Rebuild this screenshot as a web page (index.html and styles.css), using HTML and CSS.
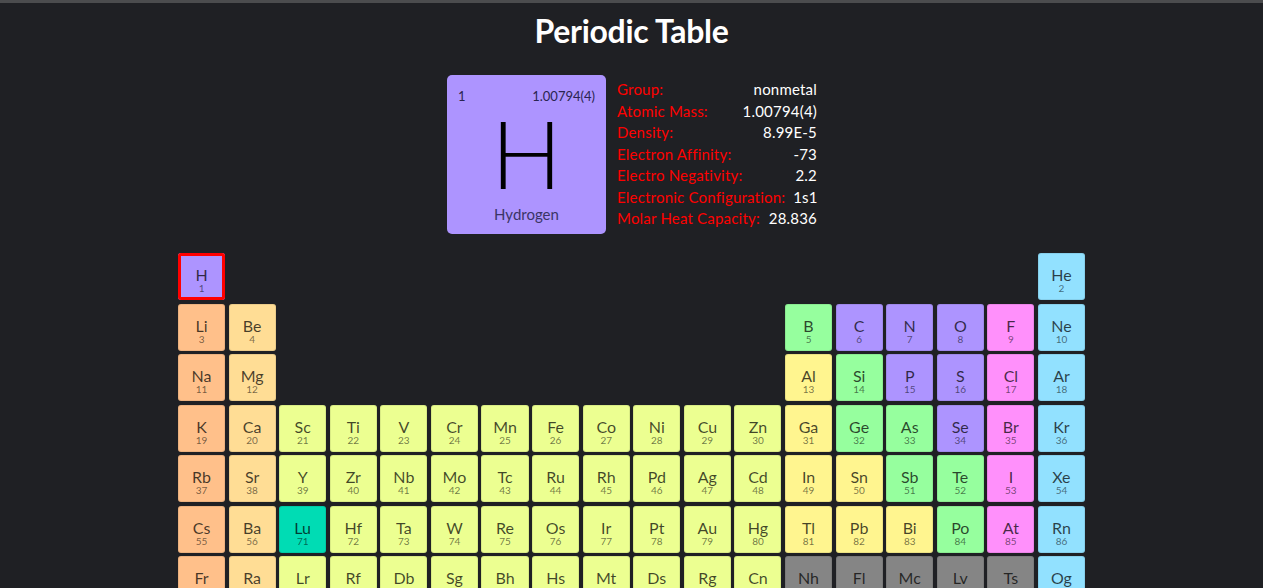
FILE: index.html
```html
<!DOCTYPE html>
<html lang="en">
<head>
<meta charset="utf-8">
<title>Periodic Table</title>
<link rel="stylesheet" href="styles.css">
</head>
<body>
<h1 class="title">Periodic Table</h1>
<section class="detail">
  <div class="card nonmetal">
    <div class="card-top"><span>1</span><span>1.00794(4)</span></div>
    <div class="card-symbol">H</div>
    <div class="card-name">Hydrogen</div>
  </div>
  <dl class="info">
    <div class="row"><dt>Group:</dt><dd>nonmetal</dd></div>
    <div class="row"><dt>Atomic Mass:</dt><dd>1.00794(4)</dd></div>
    <div class="row"><dt>Density:</dt><dd>8.99E-5</dd></div>
    <div class="row"><dt>Electron Affinity:</dt><dd>-73</dd></div>
    <div class="row"><dt>Electro Negativity:</dt><dd>2.2</dd></div>
    <div class="row"><dt>Electronic Configuration:</dt><dd>1s1</dd></div>
    <div class="row"><dt>Molar Heat Capacity:</dt><dd>28.836</dd></div>
  </dl>
</section>
<div class="table">
  <div class="el nonmetal selected"><b>H</b><i>1</i></div>
  <div class="el noble c18"><b>He</b><i>2</i></div>

  <div class="el alkali"><b>Li</b><i>3</i></div>
  <div class="el alkaline"><b>Be</b><i>4</i></div>
  <div class="el metalloid c13"><b>B</b><i>5</i></div>
  <div class="el nonmetal"><b>C</b><i>6</i></div>
  <div class="el nonmetal"><b>N</b><i>7</i></div>
  <div class="el nonmetal"><b>O</b><i>8</i></div>
  <div class="el halogen"><b>F</b><i>9</i></div>
  <div class="el noble"><b>Ne</b><i>10</i></div>

  <div class="el alkali"><b>Na</b><i>11</i></div>
  <div class="el alkaline"><b>Mg</b><i>12</i></div>
  <div class="el post c13"><b>Al</b><i>13</i></div>
  <div class="el metalloid"><b>Si</b><i>14</i></div>
  <div class="el nonmetal"><b>P</b><i>15</i></div>
  <div class="el nonmetal"><b>S</b><i>16</i></div>
  <div class="el halogen"><b>Cl</b><i>17</i></div>
  <div class="el noble"><b>Ar</b><i>18</i></div>

  <div class="el alkali"><b>K</b><i>19</i></div>
  <div class="el alkaline"><b>Ca</b><i>20</i></div>
  <div class="el transition"><b>Sc</b><i>21</i></div>
  <div class="el transition"><b>Ti</b><i>22</i></div>
  <div class="el transition"><b>V</b><i>23</i></div>
  <div class="el transition"><b>Cr</b><i>24</i></div>
  <div class="el transition"><b>Mn</b><i>25</i></div>
  <div class="el transition"><b>Fe</b><i>26</i></div>
  <div class="el transition"><b>Co</b><i>27</i></div>
  <div class="el transition"><b>Ni</b><i>28</i></div>
  <div class="el transition"><b>Cu</b><i>29</i></div>
  <div class="el transition"><b>Zn</b><i>30</i></div>
  <div class="el post"><b>Ga</b><i>31</i></div>
  <div class="el metalloid"><b>Ge</b><i>32</i></div>
  <div class="el metalloid"><b>As</b><i>33</i></div>
  <div class="el nonmetal"><b>Se</b><i>34</i></div>
  <div class="el halogen"><b>Br</b><i>35</i></div>
  <div class="el noble"><b>Kr</b><i>36</i></div>

  <div class="el alkali"><b>Rb</b><i>37</i></div>
  <div class="el alkaline"><b>Sr</b><i>38</i></div>
  <div class="el transition"><b>Y</b><i>39</i></div>
  <div class="el transition"><b>Zr</b><i>40</i></div>
  <div class="el transition"><b>Nb</b><i>41</i></div>
  <div class="el transition"><b>Mo</b><i>42</i></div>
  <div class="el transition"><b>Tc</b><i>43</i></div>
  <div class="el transition"><b>Ru</b><i>44</i></div>
  <div class="el transition"><b>Rh</b><i>45</i></div>
  <div class="el transition"><b>Pd</b><i>46</i></div>
  <div class="el transition"><b>Ag</b><i>47</i></div>
  <div class="el transition"><b>Cd</b><i>48</i></div>
  <div class="el post"><b>In</b><i>49</i></div>
  <div class="el post"><b>Sn</b><i>50</i></div>
  <div class="el metalloid"><b>Sb</b><i>51</i></div>
  <div class="el metalloid"><b>Te</b><i>52</i></div>
  <div class="el halogen"><b>I</b><i>53</i></div>
  <div class="el noble"><b>Xe</b><i>54</i></div>

  <div class="el alkali"><b>Cs</b><i>55</i></div>
  <div class="el alkaline"><b>Ba</b><i>56</i></div>
  <div class="el lanthanide"><b>Lu</b><i>71</i></div>
  <div class="el transition"><b>Hf</b><i>72</i></div>
  <div class="el transition"><b>Ta</b><i>73</i></div>
  <div class="el transition"><b>W</b><i>74</i></div>
  <div class="el transition"><b>Re</b><i>75</i></div>
  <div class="el transition"><b>Os</b><i>76</i></div>
  <div class="el transition"><b>Ir</b><i>77</i></div>
  <div class="el transition"><b>Pt</b><i>78</i></div>
  <div class="el transition"><b>Au</b><i>79</i></div>
  <div class="el transition"><b>Hg</b><i>80</i></div>
  <div class="el post"><b>Tl</b><i>81</i></div>
  <div class="el post"><b>Pb</b><i>82</i></div>
  <div class="el post"><b>Bi</b><i>83</i></div>
  <div class="el metalloid"><b>Po</b><i>84</i></div>
  <div class="el halogen"><b>At</b><i>85</i></div>
  <div class="el noble"><b>Rn</b><i>86</i></div>

  <div class="el alkali"><b>Fr</b><i>87</i></div>
  <div class="el alkaline"><b>Ra</b><i>88</i></div>
  <div class="el transition"><b>Lr</b><i>103</i></div>
  <div class="el transition"><b>Rf</b><i>104</i></div>
  <div class="el transition"><b>Db</b><i>105</i></div>
  <div class="el transition"><b>Sg</b><i>106</i></div>
  <div class="el transition"><b>Bh</b><i>107</i></div>
  <div class="el transition"><b>Hs</b><i>108</i></div>
  <div class="el transition"><b>Mt</b><i>109</i></div>
  <div class="el transition"><b>Ds</b><i>110</i></div>
  <div class="el transition"><b>Rg</b><i>111</i></div>
  <div class="el transition"><b>Cn</b><i>112</i></div>
  <div class="el unknown"><b>Nh</b><i>113</i></div>
  <div class="el unknown"><b>Fl</b><i>114</i></div>
  <div class="el unknown"><b>Mc</b><i>115</i></div>
  <div class="el unknown"><b>Lv</b><i>116</i></div>
  <div class="el unknown"><b>Ts</b><i>117</i></div>
  <div class="el noble"><b>Og</b><i>118</i></div>
</div>
</body>
</html>
```
FILE: styles.css
```css
html, body {
  margin: 0;
  padding: 0;
  background: #1f2024;
}
body {
  border-top: 3px solid #4b4c4e;
  font-family: Lato, "Open Sans", sans-serif;
  color: #fff;
  padding-bottom: 40px;
}
.title {
  margin: 8px 0 0;
  font-size: 32px;
  line-height: 40px;
  font-weight: 700;
  text-align: center;
  color: #fff;
  letter-spacing: -0.3px;
}
.detail {
  display: flex;
  justify-content: center;
  align-items: flex-start;
  gap: 11px;
  margin-top: 24px;
  padding-left: 1px;
}
.card {
  width: 159px;
  height: 159px;
  box-sizing: border-box;
  border-radius: 5px;
  padding: 12px 11px 10px;
  display: flex;
  flex-direction: column;
  color: #222;
}
.card-top {
  display: flex;
  justify-content: space-between;
  font-size: 13px;
  line-height: 18px;
  color: #2a2450;
}
.card-symbol {
  flex: 1;
  display: flex;
  align-items: center;
  justify-content: center;
  font-size: 94px;
  font-weight: 300;
  line-height: 70px;
  color: #000;
  padding-bottom: 4px;
}
.card-name {
  text-align: center;
  font-size: 15px;
  line-height: 20px;
  color: #3b3466;
}
.info {
  margin: 0;
  padding-top: 4px;
  width: 200px;
  display: flex;
  flex-direction: column;
  font-size: 15px;
  line-height: 21.5px;
  letter-spacing: 0.2px;
}
.row {
  display: flex;
  justify-content: space-between;
  gap: 8px;
}
.info dt {
  color: #ff0000;
  margin: 0;
  white-space: nowrap;
}
.info dd {
  margin: 0;
  text-align: right;
  color: #fff;
  white-space: nowrap;
}
.table {
  width: 907px;
  margin: 19px auto 0;
  display: grid;
  grid-template-columns: repeat(18, 1fr);
  grid-auto-rows: 47px;
  gap: 3.5px;
}
.el {
  border-radius: 3px;
  box-sizing: border-box;
  box-shadow: inset 0 0 0 1px rgba(0, 0, 0, 0.08);
  display: flex;
  flex-direction: column;
  align-items: center;
  justify-content: center;
  padding-top: 7px;
}
.el b {
  font-weight: 400;
  font-size: 16px;
  line-height: 17px;
  color: rgba(0, 0, 0, 0.72);
}
.el i {
  font-style: normal;
  font-size: 10px;
  line-height: 11px;
  color: rgba(0, 0, 0, 0.55);
}
.el.selected {
  box-shadow: inset 0 0 0 3px #ff0000;
}
.c13 { grid-column-start: 13; }
.c18 { grid-column-start: 18; }

.alkali { background: #ffc08a; }
.alkaline { background: #ffdd95; }
.transition { background: #ecff91; }
.post { background: #fff58f; }
.metalloid { background: #96ff9e; }
.nonmetal { background: #ad94ff; }
.halogen { background: #ff90fb; }
.noble { background: #92e1ff; }
.lanthanide { background: #00dcb4; }
.unknown { background: #858585; }
```
